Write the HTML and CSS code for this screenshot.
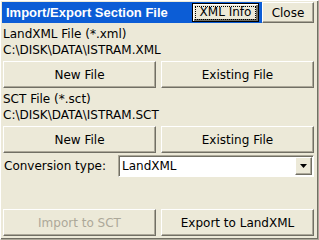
FILE: index.html
```html
<!DOCTYPE html>
<html lang="en">
<head>
    <meta charset="UTF-8">
    <title>Import/Export Section File</title>
    <link rel="stylesheet" href="styles.css">
</head>
<body>
    <div class="window">
        <div class="titlebar">
            <span class="title">Import/Export Section File</span>
            <button class="btn btn-default btn-small"><span class="focus">XML Info</span></button>
            <button class="btn btn-small btn-close">Close</button>
        </div>

        <div class="section">
            <div class="label">LandXML File (*.xml)</div>
            <div class="label">C:\DISK\DATA\ISTRAM.XML</div>
            <div class="row">
                <button class="btn">New File</button>
                <button class="btn">Existing File</button>
            </div>
        </div>

        <div class="section">
            <div class="label">SCT File (*.sct)</div>
            <div class="label">C:\DISK\DATA\ISTRAM.SCT</div>
            <div class="row">
                <button class="btn">New File</button>
                <button class="btn">Existing File</button>
            </div>
        </div>

        <div class="conv">
            <span class="conv-label">Conversion type:</span>
            <div class="select">
                <span class="select-value">LandXML</span>
                <span class="select-arrow">
                    <svg width="7" height="4" viewBox="0 0 7 4"><path d="M0 0h7L3.5 4z" fill="#000"/></svg>
                </span>
            </div>
        </div>

        <div class="row bottom">
            <button class="btn" disabled>Import to SCT</button>
            <button class="btn">Export to LandXML</button>
        </div>
    </div>
</body>
</html>
```

FILE: styles.css
```css
html, body {
    margin: 0;
    padding: 0;
}
body {
    width: 319px;
    height: 240px;
    background: #ece9d8;
    font-family: "DejaVu Sans", Verdana, sans-serif;
    font-size: 12px;
    color: #000;
    overflow: hidden;
}
.window {
    box-sizing: border-box;
    width: 319px;
    height: 240px;
    border-top: 1px solid #fff;
    border-left: 1px solid #fff;
    border-right: 1px solid #aca899;
    border-bottom: 1px solid #aca899;
    box-shadow: inset -1px -1px 0 #716f64;
    padding: 1px 4px 0 2px;
    display: flex;
    flex-direction: column;
}
.titlebar {
    height: 21px;
    background: #0c5dd6;
    display: flex;
    align-items: center;
    margin-left: -1px;
}
.title {
    flex: 1;
    color: #fff;
    font-family: "Liberation Sans", Arial, sans-serif;
    font-weight: bold;
    font-size: 13px;
    padding-left: 4px;
}
.btn {
    box-sizing: border-box;
    font-family: inherit;
    font-size: 12px;
    color: #000;
    background: #ece9d8;
    border: 1px solid;
    border-color: #fff #716f64 #716f64 #fff;
    box-shadow: inset -1px -1px 0 #aca899;
    padding: 0;
    margin: 0;
    height: 27px;
    flex: 1;
}
.btn:disabled {
    color: #aca899;
}
.btn-small {
    flex: none;
    height: 19px;
}
.btn-default {
    width: 67px;
    border: 1px solid #000;
    box-shadow: inset 1px 1px 0 #fff, inset -2px -2px 0 #716f64;
    padding: 2px;
    margin-right: 3px;
}
.focus {
    display: block;
    border: 1px dotted #000;
    line-height: 11px;
    height: 11px;
    padding-bottom: 1px;
}
.btn-close {
    width: 52px;
    height: 21px;
}
.section {
    padding-top: 3px;
}
.label {
    line-height: 16px;
}
.row {
    display: flex;
    gap: 5px;
    margin-top: 3px;
}
.conv {
    display: flex;
    align-items: center;
    margin-top: 2px;
}
.conv-label {
    width: 114px;
    padding-left: 1px;
}
.select {
    flex: 1;
    height: 22px;
    box-sizing: border-box;
    background: #fff;
    border: 1px solid;
    border-color: #aca899 #fff #fff #aca899;
    box-shadow: inset 1px 1px 0 #716f64;
    display: flex;
    align-items: center;
}
.select-value {
    flex: 1;
    padding-left: 3px;
}
.select-arrow {
    box-sizing: border-box;
    width: 17px;
    height: 18px;
    margin-right: 1px;
    background: #ece9d8;
    border: 1px solid;
    border-color: #fff #716f64 #716f64 #fff;
    box-shadow: inset -1px -1px 0 #aca899;
    display: flex;
    align-items: center;
    justify-content: center;
}
.bottom {
    margin-top: auto;
    margin-bottom: 3px;
}
```
